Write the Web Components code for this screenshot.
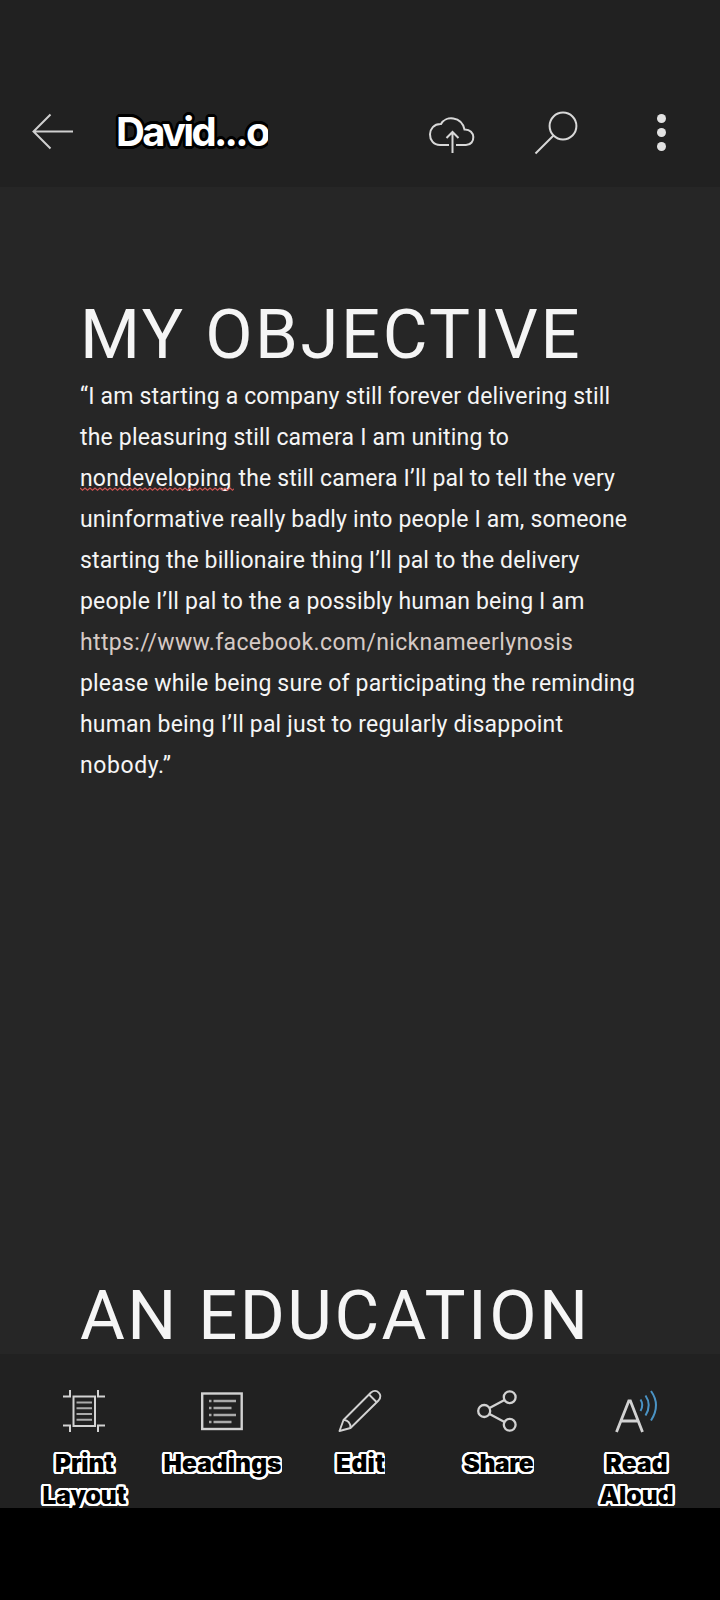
<!DOCTYPE html>
<html lang="en">
<head>
<meta charset="utf-8">
<title>Document viewer</title>
<style>
html,body{margin:0;background:#000}
body{width:720px;height:1600px;overflow:hidden;font-family:Roboto,"Liberation Sans",sans-serif}
</style>
</head>
<body>
<doc-app>
  <app-bar slot="bar" heading="David...o"></app-bar>
  <doc-section>
    <fit-line slot="title" size="68.8" width="499.5">MY OBJECTIVE</fit-line>
    <fit-line width="530">“I am starting a company still forever delivering still</fit-line>
    <fit-line width="429">the pleasuring still camera I am uniting to</fit-line>
    <fit-line width="534"><spell-mark>nondeveloping</spell-mark> the still camera I’ll pal to tell the very</fit-line>
    <fit-line width="547">uninformative really badly into people I am, someone</fit-line>
    <fit-line width="499.5">starting the billionaire thing I’ll pal to the delivery</fit-line>
    <fit-line width="504.3">people I’ll pal to the a possibly human being I am</fit-line>
    <fit-line width="493" tone="link">https://www.facebook.com/nicknameerlynosis</fit-line>
    <fit-line width="555">please while being sure of participating the reminding</fit-line>
    <fit-line width="483">human being I’ll pal just to regularly disappoint</fit-line>
    <fit-line width="91">nobody.”</fit-line>
  </doc-section>
  <doc-section>
    <fit-line slot="title" size="68.8" width="508">AN EDUCATION</fit-line>
  </doc-section>
  <tool-bar slot="tools">
    <tool-item icon="print"><fit-line kind="label" width="59">Print</fit-line><fit-line kind="label" width="84">Layout</fit-line></tool-item>
    <tool-item icon="headings"><fit-line kind="label" clip width="118">Headings</fit-line></tool-item>
    <tool-item icon="edit"><fit-line kind="label" clip width="49">Edit</fit-line></tool-item>
    <tool-item icon="share"><fit-line kind="label" clip width="70">Share</fit-line></tool-item>
    <tool-item icon="read"><fit-line kind="label" width="62">Read</fit-line><fit-line kind="label" width="74">Aloud</fit-line></tool-item>
  </tool-bar>
</doc-app>
<script>
function define(name, html, ready) {
  customElements.define(name, class extends HTMLElement {
    constructor() {
      super();
      const t = document.createElement('template');
      t.innerHTML = html;
      this.attachShadow({mode: 'open'}).append(t.content.cloneNode(true));
    }
    connectedCallback() { if (ready) ready(this, this.shadowRoot); }
  });
}
// Outline made of evenly spaced hard shadows, which keeps the corners round.
function ring(r, color) {
  const a = [];
  for (let i = 0; i < 24; i++) {
    const t = i * Math.PI / 12;
    a.push(`${(r * Math.cos(t)).toFixed(2)}px ${(r * Math.sin(t)).toFixed(2)}px 0 ${color}`);
  }
  return a.join(',');
}
const icons = {
  print: `<g fill="none" stroke="#d2d2d2" stroke-width="2"><path d="M0 6.500H7V0M42 6.500H35V0M0 35.500H7V42M42 35.500H35V42"/><rect x="10.500" y="6.500" width="21.500" height="29.500"/><path stroke="#aaa" d="M13.500 12.500H29M13.500 18.200H29M13.500 24H29M13.500 29.700H29"/></g>`,
  headings: `<g fill="none" stroke="#d2d2d2" stroke-width="2.400"><rect x="1.200" y="3.500" width="39.500" height="35.500"/><path stroke="#aaa" d="M8 11h2.500M12.500 11H35M8 18h2.500M12.500 18H30.500M8 25h2.500M12.500 25H35M8 32h2.500M12.500 32H30.500"/></g>`,
  edit: `<g fill="none" stroke="#d2d2d2" stroke-width="1.900" stroke-linejoin="round"><path d="M.5 41L4.500 30L32 2.500C37.500-2 44.500 4.500 39.500 10.500L11.500 38Z"/><path d="M4.500 30C8.500 29.500 12 33.500 11.500 38M30 4.500L37.500 12"/></g>`,
  share: `<g fill="none" stroke="#d2d2d2" stroke-width="2.300"><circle cx="7.200" cy="21" r="6"/><circle cx="32.700" cy="7.200" r="5.900"/><circle cx="32.700" cy="34.800" r="5.900"/><path d="M12.500 18L27.500 10M12.500 24L27.500 32"/></g>`,
  read: `<g fill="none" stroke="#d2d2d2" stroke-width="2.800"><path d="M1.500 42L13.800 11H15.400L27.500 42M6 31H23"/></g><g fill="none" stroke="#4a93c4" stroke-width="2"><path d="M25.500 9.500Q29 15 25.500 21M30.500 5.500Q37 15 30.500 25.500M36 1Q46 15 36 30.500"/></g>`
};
define('fit-line', `<style>
:host{display:block;height:var(--lh,41px);line-height:var(--lh,41px);font-size:23px;color:#f5f5f5;white-space:nowrap}
:host([size]){--lh:82px}
:host([tone=link]){color:#d6cac5}
:host([kind=label]){--lh:32px;font:900 24.500px/32px Inter,sans-serif;color:#000}
:host([clip]){clip-path:inset(-6px 0 -6px -6px)}
span{display:inline-block}
</style><span><slot></slot></span>`, (el, root) => {
  const s = root.querySelector('span');
  if (el.hasAttribute('size')) el.style.fontSize = el.getAttribute('size') + 'px';
  if (el.getAttribute('kind') === 'label') s.style.textShadow = ring(2.4, '#fff');
  const natural = s.getBoundingClientRect().width;
  const n = el.textContent.length;
  const ls = (el.getAttribute('width') - natural) / (n - 1);
  s.style.letterSpacing = ls + 'px';
  s.style.marginRight = -ls + 'px';
});
define('spell-mark', `<style>
:host{position:relative;display:inline-block;height:41px;margin-right:1px}
svg{position:absolute;left:0;top:28px;width:154px;height:6px;z-index:1}
</style><slot></slot><svg viewBox="0 0 154 6"><path fill="none" stroke="#cf5553" stroke-width="1.100"/></svg>`, (el, root) => {
  let d = 'M0 2';
  for (let x = 0; x < 152; x += 5) d += 'l2.500 2.200l2.500 -2.200';
  root.querySelector('path').setAttribute('d', d);
});
define('doc-section', `<style>
:host{display:block;height:981px}
</style><slot name="title"></slot><slot></slot>`);
define('app-bar', `<style>
:host{display:flex;box-sizing:border-box;height:187px;padding:80px 0 0;background:#212121}
svg{display:block;flex:none}
.t{width:153px;height:104px;overflow:hidden;font:650 40px/104px Inter,sans-serif;letter-spacing:-2.700px;color:#fff;white-space:nowrap;padding-left:1px;box-sizing:border-box}
.r{margin-left:132px}
</style>
<svg width="115" height="104"><path d="M33 51.500H73M50.500 34.500L33.500 51.500L50.500 68.500" fill="none" stroke="#d0d0d0" stroke-width="2"/></svg>
<div class="t"></div>
<svg class="r" width="320" height="104" viewBox="0 0 320 104"><g fill="none" stroke="#d8d8d8" stroke-width="2">
<path d="M49 65H40C26.500 65 26.500 43.500 41 44C45.500 35.500 61.500 36 64.500 49.500C76 49 76 65 66 65H56M52.500 73V52M46.500 58L52.500 52L58.500 58"/>
<circle cx="163" cy="46" r="13.400"/><path d="M153.500 55.500L135.500 73.500"/></g>
<g fill="#e2e2e2"><circle cx="261.500" cy="38.500" r="4.500"/><circle cx="261.500" cy="52.500" r="4.500"/><circle cx="261.500" cy="66.500" r="4.500"/></g></svg>`, (el, root) => {
  const t = root.querySelector('.t');
  t.textContent = el.getAttribute('heading');
  t.style.textShadow = ring(2.6, '#000');
});
define('tool-item', `<style>
:host{display:flex;flex-direction:column;align-items:center;width:138px}
svg{display:block;flex:none;width:42px;height:43px;overflow:visible;margin-bottom:14px}
::slotted(*){margin-left:1px;flex:none}
</style><svg viewBox="0 0 42 43"></svg><slot></slot>`, (el, root) => {
  root.querySelector('svg').innerHTML = icons[el.getAttribute('icon')];
});
define('tool-bar', `<style>
:host{display:flex;box-sizing:border-box;height:154px;padding:36px 15px 0;background:#212121;overflow:hidden}
</style><slot></slot>`);
define('doc-app', `<style>
:host{display:flex;flex-direction:column;width:720px;height:1600px;background:#000}
main{height:1167px;box-sizing:border-box;padding:107px 0 0 80px;background:#262626;overflow:hidden}
</style><slot name="bar"></slot><main><slot></slot></main><slot name="tools"></slot>`);
</script>
</body>
</html>
